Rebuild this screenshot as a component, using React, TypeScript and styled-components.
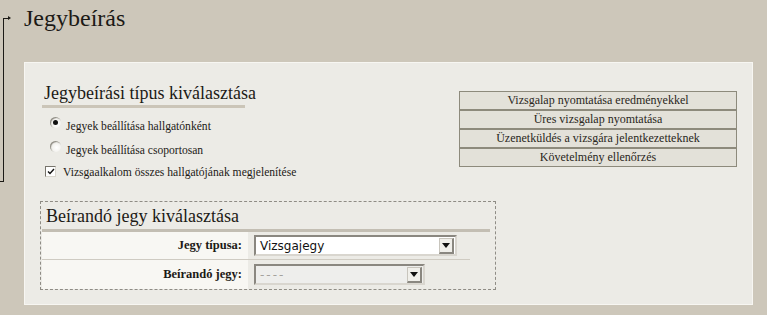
import React from 'react'
import styled, {createGlobalStyle} from 'styled-components'

const GlobalStyle = createGlobalStyle`
  html, body {
    margin: 0;
    padding: 0;
    background: #cdc7ba;
  }
  body {
    font-family: 'Liberation Serif', 'Times New Roman', serif;
    color: #1c1a16;
  }
`

const Page = styled.div`
  position: relative;
  width: 767px;
  height: 315px;
  overflow: hidden;
  padding: 0 0 0 24px;
  box-sizing: border-box;
`

const TreeLine = styled.div`
  position: absolute;
  left: 3px;
  top: 18px;
  width: 5px;
  height: 163px;
  border-left: 1px solid #1c1a16;
  border-top: 1px solid #1c1a16;

  &::before {
    content: '';
    position: absolute;
    left: 4px;
    top: -3px;
    border-left: 3px solid #1c1a16;
    border-top: 2px solid transparent;
    border-bottom: 2px solid transparent;
  }

  &::after {
    content: '';
    position: absolute;
    left: -4px;
    bottom: 0;
    width: 4px;
    border-top: 1px solid #1c1a16;
  }
`

const PageTitle = styled.h1`
  margin: 0;
  height: 62px;
  padding-top: 4px;
  box-sizing: border-box;
  font-size: 24px;
  font-weight: normal;
  line-height: 28px;
`

const Panel = styled.div`
  width: 729px;
  height: 243px;
  box-sizing: border-box;
  background: #ecebe6;
  border: 1px solid #f7f6f2;
  padding: 19px 0 0 15px;
  display: flex;
  flex-direction: column;
`

const TopRow = styled.div`
  display: flex;
  justify-content: space-between;
  width: 697px;
`

const TypeColumn = styled.div`
  display: flex;
  flex-direction: column;
  width: 300px;
`

const SectionTitle = styled.div`
  align-self: flex-start;
  margin-left: 2px;
  font-size: 18px;
  line-height: 22px;
  padding: 0 0 1px 2px;
  border-bottom: 3px solid #cbc5b8;
  width: 201px;
  white-space: nowrap;
`

const OptionList = styled.div`
  display: flex;
  flex-direction: column;
  margin-top: 6px;
`

const Option = styled.label<{height: number; indent: number; gap: number}>`
  display: flex;
  align-items: center;
  height: ${(props) => props.height}px;
  padding-left: ${(props) => props.indent}px;
  gap: ${(props) => props.gap}px;
  font-size: 11.6px;
  white-space: nowrap;
`

const Radio = styled.span<{checked?: boolean}>`
  width: 11px;
  height: 11px;
  border-radius: 50%;
  background: radial-gradient(circle at 60% 60%, #ffffff 0%, #f1f0ec 55%, #c9c6bd 100%);
  box-shadow: inset 1px 1px 1px #8d8a82;
  position: relative;
  top: -4px;
  flex-shrink: 0;

  &::after {
    content: '';
    display: ${(props) => (props.checked ? 'block' : 'none')};
    position: absolute;
    left: 3px;
    top: 3px;
    width: 5px;
    height: 5px;
    border-radius: 50%;
    background: #111;
  }
`

const CheckBox = styled.span`
  width: 9px;
  height: 9px;
  border: 1px solid #77746c;
  border-right-color: #d8d5cd;
  border-bottom-color: #d8d5cd;
  background: #ffffff;
  display: flex;
  align-items: center;
  justify-content: center;
  position: relative;
  top: -1px;
  flex-shrink: 0;
`

const ButtonStack = styled.div`
  margin-top: 9px;
  width: 276px;
  display: flex;
  flex-direction: column;
  border: 1px solid #8d8a7c;
  background: #8d8a7c;
  gap: 2px;
  align-self: flex-start;
`

const ActionButton = styled.div`
  height: 17px;
  background: #e3e1d9;
  font-size: 12px;
  line-height: 17px;
  text-align: center;
  color: #2a2721;
`

const GradeBox = styled.div`
  margin-top: 19px;
  width: 456px;
  height: 89px;
  box-sizing: border-box;
  border: 1px dashed #8f8c85;
  padding: 1px 0 0 1px;
  display: flex;
  flex-direction: column;
`

const GradeTitle = styled.div`
  font-size: 18px;
  line-height: 26px;
  padding-left: 4px;
  height: 26px;
  border-bottom: 3px solid #c3beb3;
  width: 444px;
  white-space: nowrap;
`

const FieldRow = styled.div<{last?: boolean}>`
  display: flex;
  height: ${(props) => (props.last ? '29px' : '27px')};
  width: 428px;
  border-bottom: ${(props) => (props.last ? 'none' : '1px solid #cfcbc2')};
`

const FieldLabel = styled.div`
  width: 206px;
  background: #f8f7f3;
  font-size: 12.5px;
  font-weight: bold;
  padding-right: 6px;
  box-sizing: border-box;
  display: flex;
  align-items: center;
  justify-content: flex-end;
  color: #1c1a16;
  white-space: nowrap;
`

const FieldCell = styled.div`
  flex: 1;
  display: flex;
  align-items: center;
  padding-left: 6px;
`

const SelectBox = styled.div<{width: number; disabled?: boolean}>`
  width: ${(props) => props.width}px;
  height: 21px;
  box-sizing: border-box;
  border: 2px solid #8a8780;
  border-right-color: #d9d6cf;
  border-bottom-color: #d9d6cf;
  background: ${(props) => (props.disabled ? '#eeeeec' : '#ffffff')};
  display: flex;
  align-items: center;
  justify-content: space-between;
  font-family: 'DejaVu Sans', 'Liberation Sans', sans-serif;
  font-size: 12px;
  letter-spacing: ${(props) => (props.disabled ? '2px' : '0')};
  color: ${(props) => (props.disabled ? '#a4a29d' : '#111')};
  padding-left: 4px;
`

const Arrow = styled.span`
  width: 15px;
  height: 16px;
  margin-right: 1px;
  box-sizing: border-box;
  border: 1px solid #c8c5bd;
  border-right: 2px solid #8a8780;
  border-bottom: 2px solid #8a8780;
  background: #f0efea;
  display: flex;
  align-items: center;
  justify-content: center;

  &::after {
    content: '';
    border-top: 5px solid #111;
    border-left: 4px solid transparent;
    border-right: 4px solid transparent;
  }
`

const actions = [
  'Vizsgalap nyomtatása eredményekkel',
  'Üres vizsgalap nyomtatása',
  'Üzenetküldés a vizsgára jelentkezetteknek',
  'Követelmény ellenőrzés'
]

const App = () => {
  return (
    <>
      <GlobalStyle />
      <Page>
        <TreeLine />
        <PageTitle>Jegybeírás</PageTitle>
        <Panel>
          <TopRow>
            <TypeColumn>
              <SectionTitle>Jegybeírási típus kiválasztása</SectionTitle>
              <OptionList>
                <Option height={24} indent={10} gap={5}>
                  <Radio checked />
                  Jegyek beállítása hallgatónként
                </Option>
                <Option height={24} indent={10} gap={5}>
                  <Radio />
                  Jegyek beállítása csoportosan
                </Option>
                <Option height={20} indent={5} gap={7}>
                  <CheckBox>
                    <svg width="8" height="7" viewBox="0 0 8 7">
                      <path d="M1 3.5 L3 5.5 L7 1" fill="none" stroke="#111" strokeWidth="1.4" />
                    </svg>
                  </CheckBox>
                  Vizsgaalkalom összes hallgatójának megjelenítése
                </Option>
              </OptionList>
            </TypeColumn>
            <ButtonStack>
              {actions.map((a) => (
                <ActionButton key={a}>{a}</ActionButton>
              ))}
            </ButtonStack>
          </TopRow>
          <GradeBox>
            <GradeTitle>Beírandó jegy kiválasztása</GradeTitle>
            <FieldRow>
              <FieldLabel>Jegy típusa:</FieldLabel>
              <FieldCell>
                <SelectBox width={203}>
                  Vizsgajegy
                  <Arrow />
                </SelectBox>
              </FieldCell>
            </FieldRow>
            <FieldRow last>
              <FieldLabel>Beírandó jegy:</FieldLabel>
              <FieldCell>
                <SelectBox width={171} disabled>
                  ----
                  <Arrow />
                </SelectBox>
              </FieldCell>
            </FieldRow>
          </GradeBox>
        </Panel>
      </Page>
    </>
  )
}

export default App
